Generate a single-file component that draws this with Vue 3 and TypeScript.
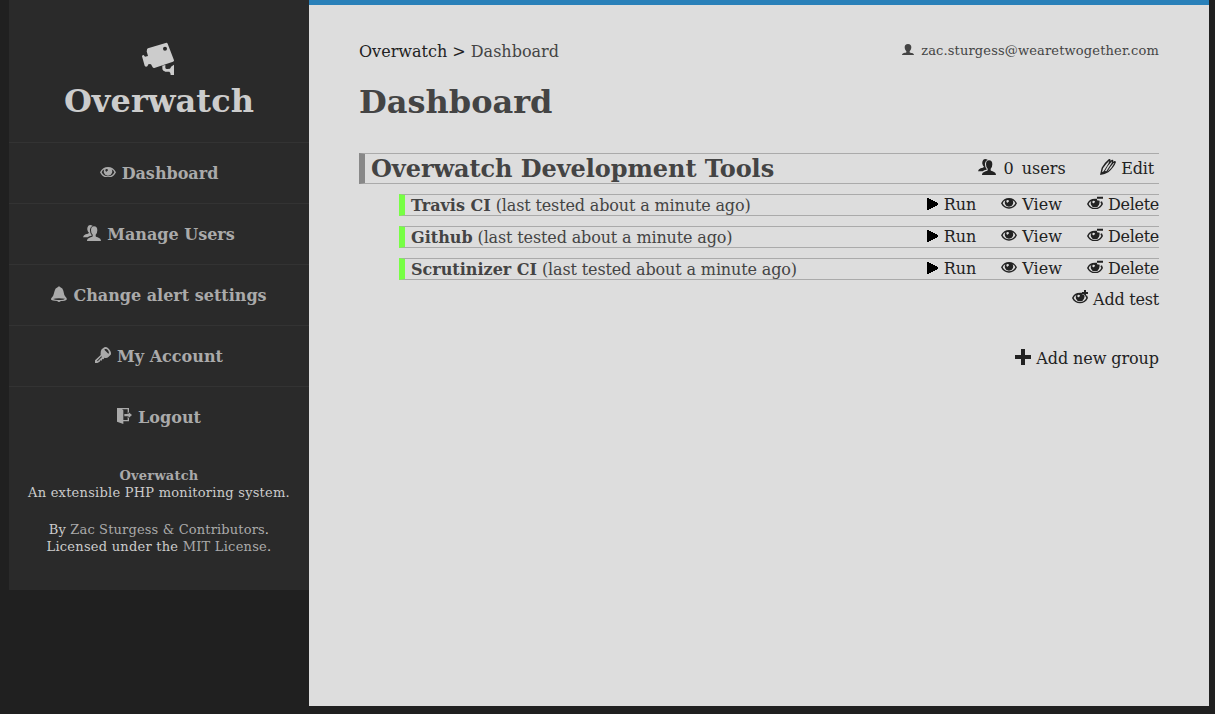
<script setup lang="ts">
import { h, type FunctionalComponent } from 'vue'

interface Glyph {
  w: number
  h: number
  d: string
}

const eyeOuter =
  'M0 16C5 5 14 0 24 0S43 5 48 16C43 27 34 32 24 32S5 27 0 16Z'
const eyeInner =
  'M5 16Q7 10 13 7Q10 12 12 18Q15 26 24 26Q33 26 36 18Q38 12 35 7Q41 10 43 16Q37 28 24 28Q11 28 5 16Z'
const eyeShine = 'M20 6A4 4 0 1 0 20 14Q22 14 21 12Q24 12 24 9A4 4 0 0 0 20 6Z'
const openEye =
  'M0 24C4 13 12 8 24 8H30V13L38 14Q38 21 36 26Q33 34 24 34Q15 34 12 26Q10 20 13 15Q7 18 5 24Q11 36 24 36Q37 36 43 24L40 18L45 16L48 24C43 35 34 40 24 40S5 35 0 24Z'
const openShine = 'M20 14A4 4 0 1 0 20 22Q22 22 21 20Q24 20 24 17A4 4 0 0 0 20 14Z'

const glyphs: Record<string, Glyph> = {
  camera: {
    w: 108,
    h: 108,
    d: 'M21 27Q20 24 24 22L77 6Q81 4 83 8L102 58Q103 61 99 62L43 81Q40 82 38 79L33 70L26 69L22 76Q17 79 14 74L6 46Q7 42 11 42L15 47L24 45L20 31ZM75 17A6 6 0 1 0 75 29A6 6 0 1 0 75 17ZM67 74L76 72V80Q77 85 82 84L90 83Q92 75 102 71V102H92Q92 95 88 92H76Q67 90 67 82Z',
  },
  eye: { w: 48, h: 32, d: eyeOuter + eyeInner + eyeShine },
  eyeMinus: { w: 48, h: 40, d: openEye + openShine + 'M30 2H48V8H30Z' },
  eyePlus: { w: 48, h: 40, d: openEye + openShine + 'M36 0H42V6H48V12H42V18H36V12H30V6H36Z' },
  users: {
    w: 54,
    h: 48,
    d: 'M29 2Q21 -2 16 2Q12 7 13 14Q14 20 18 23Q17 26 8 28Q1 31 0 37H14Q18 33 26 32V30Q20 23 21 13Q22 5 29 2ZM33 4Q24 4 24 16Q24 25 29 29V34C27 38 12 37 12 48H54C54 37 40 38 38 34V29Q43 25 43 16Q43 4 33 4Z',
  },
  user: {
    w: 36,
    h: 33,
    d: 'M18 0C11 0 8 4 8 10C8 16 11 20 13 22V25C12 28 0 26 0 33H36C36 26 24 28 23 25V22C25 20 28 16 28 10C28 4 25 0 18 0Z',
  },
  bell: {
    w: 48,
    h: 48,
    d: 'M21 3Q24 -2 27 3Q36 6 37 14L40 27Q43 32 46 35Q52 44 35 45L29 45Q28 48 24 48Q20 48 19 45Q-5 45 1 37L3 34Q7 31 8 25L11 14Q12 6 21 3ZM6 39Q13 42 20 42L28 42Q39 42 42 38Q33 37 24 37Q12 37 6 39Z',
  },
  key: {
    w: 48,
    h: 48,
    d: 'M20 7L28 1Q37 -3 46 12Q50 20 47 23L41 29Q35 35 28 32L26 37L22 36L20 41L16 40L14 44L7 48H0V40L17 24Q16 12 20 7ZM30 6L28 8L40 20L42 18Q41 11 36 7Q33 5 30 6ZM19 28L6 41L8 43L21 30Z',
  },
  exit: {
    w: 45,
    h: 48,
    d: 'M0 0H36V17H32V4H15L19 7V36H32V26H36V40H19V48L0 41ZM22 18H34V12L45 21L34 31V25H22Z',
  },
  pencil: {
    w: 48,
    h: 48,
    d: 'M0 48L5 26Q14 11 26 1Q30 -1 32 3L31 6Q37 0 40 3L39 8Q46 4 48 9Q43 24 25 40Q15 46 0 48ZM9 28L6 40L11 37L25 14L28 5Q17 15 9 28ZM15 36L19 37L35 12L36 7Q24 18 15 36ZM22 38Q36 27 43 12L41 12Q31 22 22 38Z',
  },
  play: { w: 36, h: 36, d: 'M3 0H9V3H15V6H21V9H27V12H33V15H36V21H33V24H27V27H21V30H15V33H9V36H3Z' },
  plus: { w: 48, h: 48, d: 'M18 0H30V18H48V30H30V48H18V30H0V18H18Z' },
}

const Icon: FunctionalComponent<{ name: string }> = (props) => {
  const g = glyphs[props.name]
  return h(
    'svg',
    { width: g.w / 3, height: g.h / 3, viewBox: `0 0 ${g.w} ${g.h}`, 'aria-hidden': 'true' },
    [h('path', { d: g.d, fill: 'currentColor', 'fill-rule': 'evenodd' })],
  )
}
Icon.props = ['name']

const menu = [
  { icon: 'eye', label: 'Dashboard' },
  { icon: 'users', label: 'Manage Users' },
  { icon: 'bell', label: 'Change alert settings' },
  { icon: 'key', label: 'My Account' },
  { icon: 'exit', label: 'Logout' },
]

const tests = ['Travis CI', 'Github', 'Scrutinizer CI']
</script>

<template>
  <div class="page">
    <aside class="sidebar">
      <header class="brand">
        <Icon name="camera" />
        <h1>Overwatch</h1>
      </header>
      <nav>
        <a v-for="item in menu" :key="item.label" class="menu-item">
          <Icon :name="item.icon" /><span>{{ item.label }}</span>
        </a>
      </nav>
      <footer class="credits">
        <p><b>Overwatch</b><br />An extensible PHP monitoring system.</p>
        <p>
          <span class="authors">By <a>Zac Sturgess &amp; Contributors</a>.</span><br />Licensed under the
          <a>MIT License</a>.
        </p>
      </footer>
    </aside>

    <main class="content">
      <div class="topline">
        <div class="crumbs"><a>Overwatch &gt; </a>Dashboard</div>
        <div class="account"><Icon name="user" /><span>zac.sturgess@wearetwogether.com</span></div>
      </div>
      <h1 class="title">Dashboard</h1>

      <section>
        <div class="group">
          <h2>Overwatch Development Tools</h2>
          <div class="group-actions">
            <a class="members"><Icon name="users" /><span>0</span><span>users</span></a>
            <a class="action"><Icon name="pencil" /><span>Edit</span></a>
          </div>
        </div>
        <div v-for="test in tests" :key="test" class="test">
          <div><b>{{ test }}</b><span class="status"> (last tested about a minute ago)</span></div>
          <div class="test-actions">
            <a class="action run"><Icon name="play" /><span>Run</span></a>
            <a class="action view"><Icon name="eye" /><span>View</span></a>
            <a class="action remove"><Icon name="eyeMinus" /><span>Delete</span></a>
          </div>
        </div>
        <div class="footer-action add-test">
          <a class="action"><Icon name="eyePlus" /><span>Add test</span></a>
        </div>
      </section>
      <div class="footer-action add-group">
        <a class="action"><Icon name="plus" /><span>Add new group</span></a>
      </div>
    </main>
  </div>
</template>

<style>
body {
  margin: 0;
  background: #202020;
}
</style>

<style scoped>
.page {
  display: flex;
  align-items: flex-start;
  box-sizing: border-box;
  height: 714px;
  padding-left: 9px;
  overflow: hidden;
  font: 16px/19px 'DejaVu Serif', serif;
  color: #444;
  white-space: nowrap;
}
h1, h2, p {
  margin: 0;
}
svg {
  display: block;
  flex: none;
}
.sidebar {
  width: 300px;
  height: 590px;
  background: #2a2a2a;
  color: #ccc;
  text-align: center;
}
.brand {
  display: flex;
  flex-direction: column;
  align-items: center;
  box-sizing: border-box;
  height: 142px;
  padding-top: 41px;
}
.brand svg {
  margin-right: 2px;
}
.brand h1 {
  margin-top: 5px;
  font-size: 32px;
  line-height: 38px;
  letter-spacing: 0.08px;
}
.menu-item {
  display: flex;
  align-items: center;
  justify-content: center;
  gap: 6px;
  height: 60px;
  border-top: 1px solid #333;
  font-weight: bold;
  color: #aaa;
}
.menu-item svg {
  margin-top: -2px;
}
.credits {
  padding-top: 20px;
  font-size: 13px;
  line-height: 17px;
  letter-spacing: 0.24px;
}
.credits p {
  margin-bottom: 20px;
}
.credits a, .credits b {
  color: #aaa;
}
.authors {
  letter-spacing: 0.15px;
}
.content {
  box-sizing: border-box;
  width: 900px;
  height: 706px;
  padding: 37px 50px 0;
  border-top: 5px solid #2980b9;
  background: #ddd;
}
.topline {
  display: flex;
  justify-content: space-between;
  height: 19px;
}
.crumbs {
  white-space: pre;
}
.crumbs a, .action, .members {
  color: #222;
}
.account {
  display: flex;
  align-items: center;
  gap: 7px;
  height: 17px;
  font-size: 13px;
  letter-spacing: 0.15px;
}
.account svg {
  margin-top: -3px;
}
.title {
  margin-top: 22px;
  font-size: 32px;
  line-height: 38px;
}
.group {
  display: flex;
  justify-content: space-between;
  align-items: center;
  box-sizing: border-box;
  height: 31px;
  margin-top: 32px;
  padding: 0 5px 0 6px;
  border: solid #aaa;
  border-width: 1px 0 1px 6px;
  border-left-color: #888;
}
.group h2 {
  font-size: 24px;
  line-height: 29px;
  letter-spacing: -0.07px;
}
.group-actions {
  display: flex;
  gap: 34.5px;
}
.members {
  display: flex;
  align-items: center;
  gap: 8px;
}
.group-actions svg {
  margin-top: -3px;
}
.group-actions .action {
  letter-spacing: -0.15px;
}
.action {
  display: flex;
  align-items: center;
  gap: 5px;
}
.test {
  display: flex;
  justify-content: space-between;
  box-sizing: border-box;
  height: 22px;
  margin: 10px 0 0 40px;
  padding-left: 6px;
  border: solid #aaa;
  border-width: 1px 0 1px 6px;
  border-left-color: #7f4;
  line-height: 22px;
}
.status {
  letter-spacing: -0.14px;
}
.test-actions {
  display: flex;
  gap: 25px;
  line-height: 20px;
  height: 20px;
}
.run {
  gap: 6px;
}
.run svg {
  margin-top: -2px;
  color: #000;
}
.view svg {
  margin-top: -3px;
}
.remove svg {
  margin-top: -5px;
}
.remove {
  letter-spacing: -0.28px;
}
.footer-action {
  display: flex;
  justify-content: flex-end;
}
.add-test {
  margin-top: 10px;
  letter-spacing: -0.22px;
}
.add-test svg {
  margin-top: -5px;
}
.add-group {
  margin-top: 40px;
  letter-spacing: -0.08px;
}
.add-group svg {
  margin-top: -3px;
}
</style>
